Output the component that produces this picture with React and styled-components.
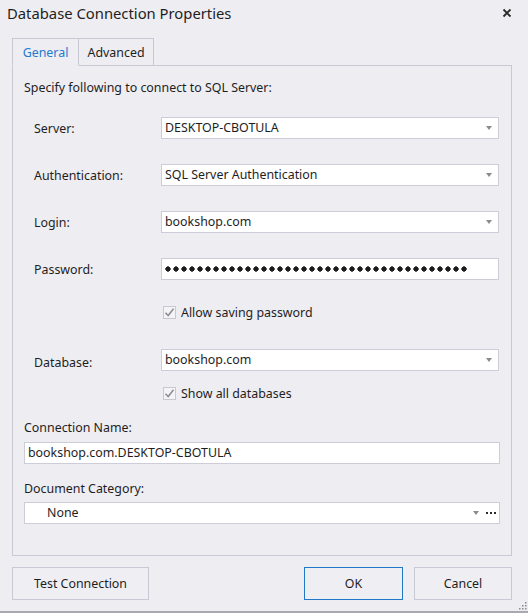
import React from "react";
import styled, { createGlobalStyle } from "styled-components";

const Global = createGlobalStyle`
  html, body { margin: 0; padding: 0; background: #eeedf2; }
  body { font-family: "Noto Sans", "Open Sans", sans-serif; }
  * { box-sizing: border-box; }
`;

const Window = styled.div`
  width: 528px;
  height: 613px;
  background: #eeedf2;
  border-bottom: 2px solid #a9a9b2;
  display: flex;
  flex-direction: column;
  position: relative;
  color: #1e1e1e;
  font-size: 12.4px;
  overflow: hidden;
`;

const TitleBar = styled.div`
  height: 26px;
  display: flex;
  align-items: center;
  justify-content: space-between;
  padding: 0 16px 0 7px;
`;

const Title = styled.div`
  font-size: 14.8px;
  line-height: 22px;
  color: #1e1e1e;
`;

const CloseBtn = styled.div`
  width: 10px;
  height: 10px;
  display: flex;
`;

const TabStrip = styled.div`
  display: flex;
  margin: 12px 0 0 12px;
  height: 28px;
`;

const Tab = styled.div`
  width: ${p => p.$w}px;
  height: 28px;
  display: flex;
  align-items: center;
  justify-content: center;
  border: 1px solid #c9c9d6;
  border-bottom: ${p => (p.$active ? "1px solid #eeedf2" : "1px solid #c9c9d6")};
  border-left: ${p => (p.$first ? "1px solid #c9c9d6" : "none")};
  color: ${p => (p.$active ? "#1f7ad0" : "#1e1e1e")};
  background: #eeedf2;
  position: relative;
  z-index: 1;
`;

const Panel = styled.div`
  margin: -1px 16px 0 12px;
  width: 500px;
  height: 491px;
  border: 1px solid #c9c9d6;
  padding: 14px 11px 0 11px;
  display: flex;
  flex-direction: column;
`;

const Intro = styled.div`
  line-height: 16px;
  height: 16px;
`;

const FieldRow = styled.div`
  display: flex;
  align-items: center;
  height: 22px;
  margin-top: ${p => p.$mt}px;
`;

const Label = styled.div`
  width: 137px;
  padding-left: 10px;
  line-height: 16px;
  position: relative;
  top: ${p => p.$dy || 0}px;
`;

const Input = styled.div`
  flex: ${p => (p.$full ? "1" : "none")};
  width: ${p => (p.$full ? "auto" : "338px")};
  height: 22px;
  background: #ffffff;
  border: 1px solid #cdcdd9;
  display: flex;
  align-items: center;
  padding-left: ${p => p.$pl || 3}px;
  padding-right: ${p => p.$pr || 6}px;
  line-height: 16px;
`;

const Value = styled.span`
  flex: 1;
  white-space: nowrap;
`;

const Arrow = styled.span`
  width: 0;
  height: 0;
  border-left: 3.5px solid transparent;
  border-right: 3.5px solid transparent;
  border-top: 4px solid #8a8a92;
  margin-right: ${p => p.$mr || 0}px;
`;

const Ellipsis = styled.span`
  width: 10px;
  height: 2px;
  background: linear-gradient(90deg, #2a2a2a 2px, transparent 2px) 0 0 / 4px 2px repeat-x;
`;

const Dots = styled.span`
  width: 304px;
  height: 6px;
  background: radial-gradient(circle at 3px 3px, #1c1c1c 2.4px, transparent 2.9px) 0 0 / 8px 6px repeat-x;
`;

const CheckRow = styled.label`
  display: flex;
  align-items: center;
  height: 16px;
  margin-top: ${p => p.$mt}px;
  margin-left: ${p => p.$ml || 0}px;
`;

const Box = styled.span`
  width: 13px;
  height: 13px;
  border: 1px solid #c8c8d2;
  background: #f4f4f7;
  display: flex;
  align-items: center;
  justify-content: center;
  margin-right: 5px;
`;

const PlainLabel = styled.div`
  line-height: 16px;
  height: 16px;
  margin-top: ${p => p.$mt}px;
`;

const WideRow = styled.div`
  display: flex;
  margin-top: ${p => p.$mt}px;
`;

const ButtonRow = styled.div`
  display: flex;
  margin: 11px 0 0 12px;
  width: 500px;
`;

const Button = styled.div`
  width: ${p => p.$w}px;
  height: 33px;
  border: 1px solid ${p => (p.$primary ? "#1f78c8" : "#c9c9d6")};
  display: flex;
  align-items: center;
  justify-content: center;
  margin-left: ${p => p.$ml || 0}px;
  background: #efeef3;
`;

const Grip = styled.div`
  position: absolute;
  right: 1px;
  bottom: 1px;
  width: 9px;
  height: 9px;
  display: flex;
`;

const Check = () => (
  <svg width="11" height="11" viewBox="0 0 11 11">
    <path d="M1.5 5.8 L4.2 8.5 L9.5 1.8" fill="none" stroke="#8c8c94" strokeWidth="1.5" />
  </svg>
);

export default function App() {
  return (
    <>
      <Global />
      <Window>
        <TitleBar>
          <Title>Database Connection Properties</Title>
          <CloseBtn>
            <svg width="10" height="10" viewBox="0 0 10 10">
              <path d="M1.5 1.5 L8.5 8.5 M8.5 1.5 L1.5 8.5" stroke="#2a2a2a" strokeWidth="1.8" />
            </svg>
          </CloseBtn>
        </TitleBar>
        <TabStrip>
          <Tab $active $first $w={67}>General</Tab>
          <Tab $w={75}>Advanced</Tab>
        </TabStrip>
        <Panel>
          <Intro>Specify following to connect to SQL Server:</Intro>
          <FieldRow $mt={21}>
            <Label $dy={1}>Server:</Label>
            <Input>
              <Value>DESKTOP-CBOTULA</Value>
              <Arrow />
            </Input>
          </FieldRow>
          <FieldRow $mt={25}>
            <Label $dy={1}>Authentication:</Label>
            <Input>
              <Value>SQL Server Authentication</Value>
              <Arrow />
            </Input>
          </FieldRow>
          <FieldRow $mt={25}>
            <Label $dy={1}>Login:</Label>
            <Input>
              <Value>bookshop.com</Value>
              <Arrow />
            </Input>
          </FieldRow>
          <FieldRow $mt={25}>
            <Label $dy={1}>Password:</Label>
            <Input>
              <Dots />
            </Input>
          </FieldRow>
          <CheckRow $mt={24} $ml={139}>
            <Box><Check /></Box>
            Allow saving password
          </CheckRow>
          <FieldRow $mt={29}>
            <Label $dy={3}>Database:</Label>
            <Input>
              <Value>bookshop.com</Value>
              <Arrow />
            </Input>
          </FieldRow>
          <CheckRow $mt={14} $ml={139}>
            <Box><Check /></Box>
            Show all databases
          </CheckRow>
          <PlainLabel $mt={19}>Connection Name:</PlainLabel>
          <WideRow $mt={6}>
            <Input $full>
              <Value>bookshop.com.DESKTOP-CBOTULA</Value>
            </Input>
          </WideRow>
          <PlainLabel $mt={17}>Document Category:</PlainLabel>
          <WideRow $mt={5}>
            <Input $full $pl={22} $pr={3}>
              <Value>None</Value>
              <Arrow $mr={7} />
              <Ellipsis />
            </Input>
          </WideRow>
        </Panel>
        <ButtonRow>
          <Button $w={137}>Test Connection</Button>
          <Button $w={99} $ml={155} $primary>OK</Button>
          <Button $w={98} $ml={11}>Cancel</Button>
        </ButtonRow>
        <Grip>
          <svg width="9" height="9" viewBox="0 0 9 9">
            <g fill="#8a8a92">
              <rect x="7" y="1" width="1.5" height="1.5" />
              <rect x="4" y="4" width="1.5" height="1.5" />
              <rect x="7" y="4" width="1.5" height="1.5" />
              <rect x="1" y="7" width="1.5" height="1.5" />
              <rect x="4" y="7" width="1.5" height="1.5" />
              <rect x="7" y="7" width="1.5" height="1.5" />
            </g>
          </svg>
        </Grip>
      </Window>
    </>
  );
}
